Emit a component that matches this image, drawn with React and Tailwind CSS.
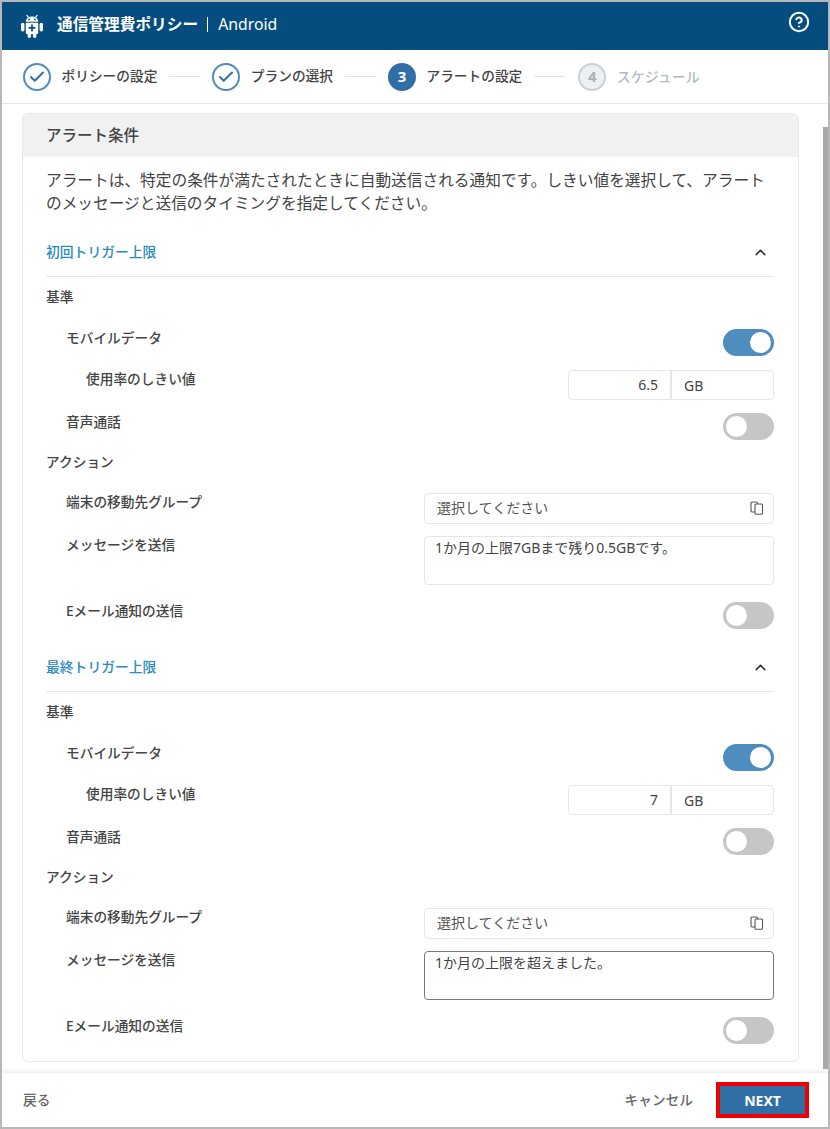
import React from "react";
import { CircleHelp, Check, ChevronUp } from "lucide-react";

const AndroidIcon = () => (
  <svg width="24" height="24" viewBox="0 0 24 25" fill="#fff">
    <path d="M6.5 1.2l1.8 2.4M17.5 1.2l-1.8 2.4" stroke="#fff" strokeWidth="1.3" fill="none" />
    <path d="M5.5 8.2C5.5 4.8 8.3 2.6 12 2.6s6.500 2.200 6.500 5.600z" />
    <rect x="0.500" y="9.200" width="3.600" height="9" rx="1.800" />
    <rect x="19.900" y="9.200" width="3.600" height="9" rx="1.800" />
    <path d="M5.500 9.200h13v10.300a1.500 1.500 0 0 1-1.500 1.500H7a1.500 1.500 0 0 1-1.500-1.500z" />
    <rect x="7.500" y="20" width="3.400" height="5" rx="1.500" />
    <rect x="13.100" y="20" width="3.400" height="5" rx="1.500" />
    <circle cx="9" cy="5.600" r="0.900" fill="#054d7e" />
    <circle cx="15" cy="5.600" r="0.900" fill="#054d7e" />
    <path d="M12 11v7M8.500 14.500h7" stroke="#054d7e" strokeWidth="1.800" />
  </svg>
);

const DevicesIcon = () => (
  <svg width="14" height="14" viewBox="0 0 14 14" fill="none" stroke="#555" strokeWidth="1.100">
    <rect x="1" y="1" width="6.500" height="10" rx="1" />
    <rect x="5" y="3" width="7.500" height="10.300" rx="1" fill="#fff" />
  </svg>
);

const Toggle = ({ on }) => (
  <div
    className={
      on
        ? "w-[51px] h-[27px] rounded-full bg-[#4f8dbe] flex items-center justify-end pr-[3px]"
        : "w-[51px] h-[27px] rounded-full bg-[#c6c6c6] flex items-center justify-start pl-[3px]"
    }
  >
    <div className="w-[21px] h-[21px] rounded-full bg-white" />
  </div>
);

const Label = ({ children, indent = "" }) => (
  <div className={`text-[13.7px] leading-[18px] font-medium text-[#444] ${indent}`}>{children}</div>
);

const Step = ({ state, n, label }) => (
  <div className="flex items-center gap-[10.5px]">
    {state === "done" && (
      <div className="w-[28px] h-[28px] rounded-full border-2 border-[#4f8dbe] flex items-center justify-center">
        <Check size={18} strokeWidth={2.6} color="#2f6fa5" />
      </div>
    )}
    {state === "active" && (
      <div className="w-[28px] h-[28px] rounded-full bg-[#2f6fa5] flex items-center justify-center text-white font-bold text-[15px]">
        {n}
      </div>
    )}
    {state === "todo" && (
      <div className="w-[28px] h-[28px] rounded-full border-2 border-[#c9d1d6] bg-[#edf0f2] flex items-center justify-center text-[#a8b0b5] font-bold text-[15px]">
        {n}
      </div>
    )}
    <span className={state === "todo" ? "text-[14px] font-medium text-[#b4bbc0]" : "text-[13.7px] font-medium text-[#444]"}>
      {label}
    </span>
  </div>
);

const StepLine = () => <div className="w-[31px] h-[1px] bg-[#dfe3e5] mx-[12px]" />;

const Section = ({ title, value, message, focused }) => (
  <section className="flex flex-col">
    <div className="h-[49px] flex items-center justify-between border-b border-[#e6e6e6]">
      <span className="text-[13.8px] font-medium text-[#2b8cc0]">{title}</span>
      <ChevronUp size={17} strokeWidth={2.2} color="#333" className="mr-[5px]" />
    </div>
    <div className="mt-[11px]"><Label>基準</Label></div>
    <div className="mt-[23px] flex justify-between items-start">
      <Label indent="pl-[20px]">モバイルデータ</Label>
      <Toggle on />
    </div>
    <div className="mt-[14px] flex justify-between items-start">
      <Label indent="pl-[40px]">使用率のしきい値</Label>
      <div className="w-[206px] h-[30px] flex border border-[#e6e6e6] rounded-[4px] text-[14px] text-[#444]">
        <div className="w-[103px] border-r-2 border-[#e6e6e6] text-right pr-[12px] leading-[27px]">{value}</div>
        <div className="flex-1 pl-[12px] leading-[29px]">GB</div>
      </div>
    </div>
    <div className="mt-[13px] flex justify-between items-start">
      <Label indent="pl-[20px]">音声通話</Label>
      <Toggle />
    </div>
    <div className="mt-[13px]"><Label>アクション</Label></div>
    <div className="mt-[22px] flex justify-between items-start">
      <Label indent="pl-[20px]">端末の移動先グループ</Label>
      <div className="w-[350px] h-[31px] flex items-center justify-between border border-[#e6e6e6] rounded-[4px] pl-[12px] pr-[9px] pb-[2px] text-[14px] text-[#555]">
        <span>選択してください</span>
        <DevicesIcon />
      </div>
    </div>
    <div className="mt-[12px] flex justify-between items-start">
      <Label indent="pl-[20px]">メッセージを送信</Label>
      <div
        className={
          focused
            ? "w-[350px] h-[49px] border border-[#777] rounded-[4px] pl-[10px] text-[14px] leading-[22px] text-[#444]"
            : "w-[350px] h-[49px] border border-[#e6e6e6] rounded-[4px] pl-[10px] text-[14px] leading-[22px] text-[#444]"
        }
      >
        {message}
      </div>
    </div>
    <div className="mt-[17px] flex justify-between items-start">
      <Label indent="pl-[20px]">Eメール通知の送信</Label>
      <Toggle />
    </div>
  </section>
);

export default function App() {
  return (
    <div
      className="w-[830px] h-[1129px] border-2 border-[#b8b8b8] bg-white flex flex-col overflow-hidden"
      style={{ fontFamily: '"Noto Sans", "Noto Sans CJK JP", sans-serif' }}
    >
      <header className="h-[48px] shrink-0 bg-[#054d7e] flex items-center justify-between pl-[18px] pr-[18px] text-white">
        <div className="flex items-center">
          <AndroidIcon />
          <div className="ml-[13px] flex items-center -mt-[3px]">
            <span className="text-[15.7px] font-bold">通信管理費ポリシー</span>
            <span className="ml-[9px] w-[1px] h-[15px] bg-white" />
            <span className="ml-[10px] text-[15.8px]">Android</span>
          </div>
        </div>
        <CircleHelp size={22} strokeWidth={2.2} color="#fff" className="-mt-[8px]" />
      </header>

      <nav className="h-[54px] shrink-0 border-b border-[#e6e6e6] flex items-center pl-[21px]">
        <Step state="done" label="ポリシーの設定" />
        <StepLine />
        <Step state="done" label="プランの選択" />
        <StepLine />
        <Step state="active" n="3" label="アラートの設定" />
        <div className="w-[31px] h-[1px] bg-[#dfe3e5] ml-[12px] mr-[13px]" />
        <Step state="todo" n="4" label="スケジュール" />
      </nav>

      <main className="flex-1 min-h-0 flex">
        <div className="flex-1 min-w-0 pl-[20px] pr-[24px] pt-[9px]">
          <div className="h-[949px] border border-[#e8e8e8] rounded-[6px] overflow-hidden">
            <div className="h-[43px] bg-[#f1f1f1] flex items-center pl-[23px] text-[15.5px] font-medium text-[#444]">
              アラート条件
            </div>
            <div className="pl-[23px] pr-[24px]">
              <p className="mt-[12px] text-[15.7px] leading-[23px] text-[#444]">
                アラートは、特定の条件が満たされたときに自動送信される通知です。しきい値を選択して、アラートのメッセージと送信のタイミングを指定してください。
              </p>
              <div className="mt-[13px] flex flex-col gap-[14px]">
                <Section title="初回トリガー上限" value="6.5" message="1か月の上限7GBまで残り0.5GBです。" />
                <Section title="最終トリガー上限" value="7" message="1か月の上限を超えました。" focused />
              </div>
            </div>
          </div>
        </div>
        <div className="w-[5px] shrink-0 mt-[23px] mb-[4px] bg-[#a9a9a9]" />
      </main>

      <footer className="h-[54px] shrink-0 bg-white shadow-[0_-2px_5px_rgba(0,0,0,0.08)] flex items-center justify-between pl-[21px] pr-[19px] text-[13.7px] font-medium text-[#666]">
        <span>戻る</span>
        <div className="flex items-center">
          <span>キャンセル</span>
          <button className="ml-[23px] w-[93px] h-[36px] border-4 border-[#f00000] bg-[#2f6fa5] text-white font-bold text-[14px]">
            NEXT
          </button>
        </div>
      </footer>
    </div>
  );
}
